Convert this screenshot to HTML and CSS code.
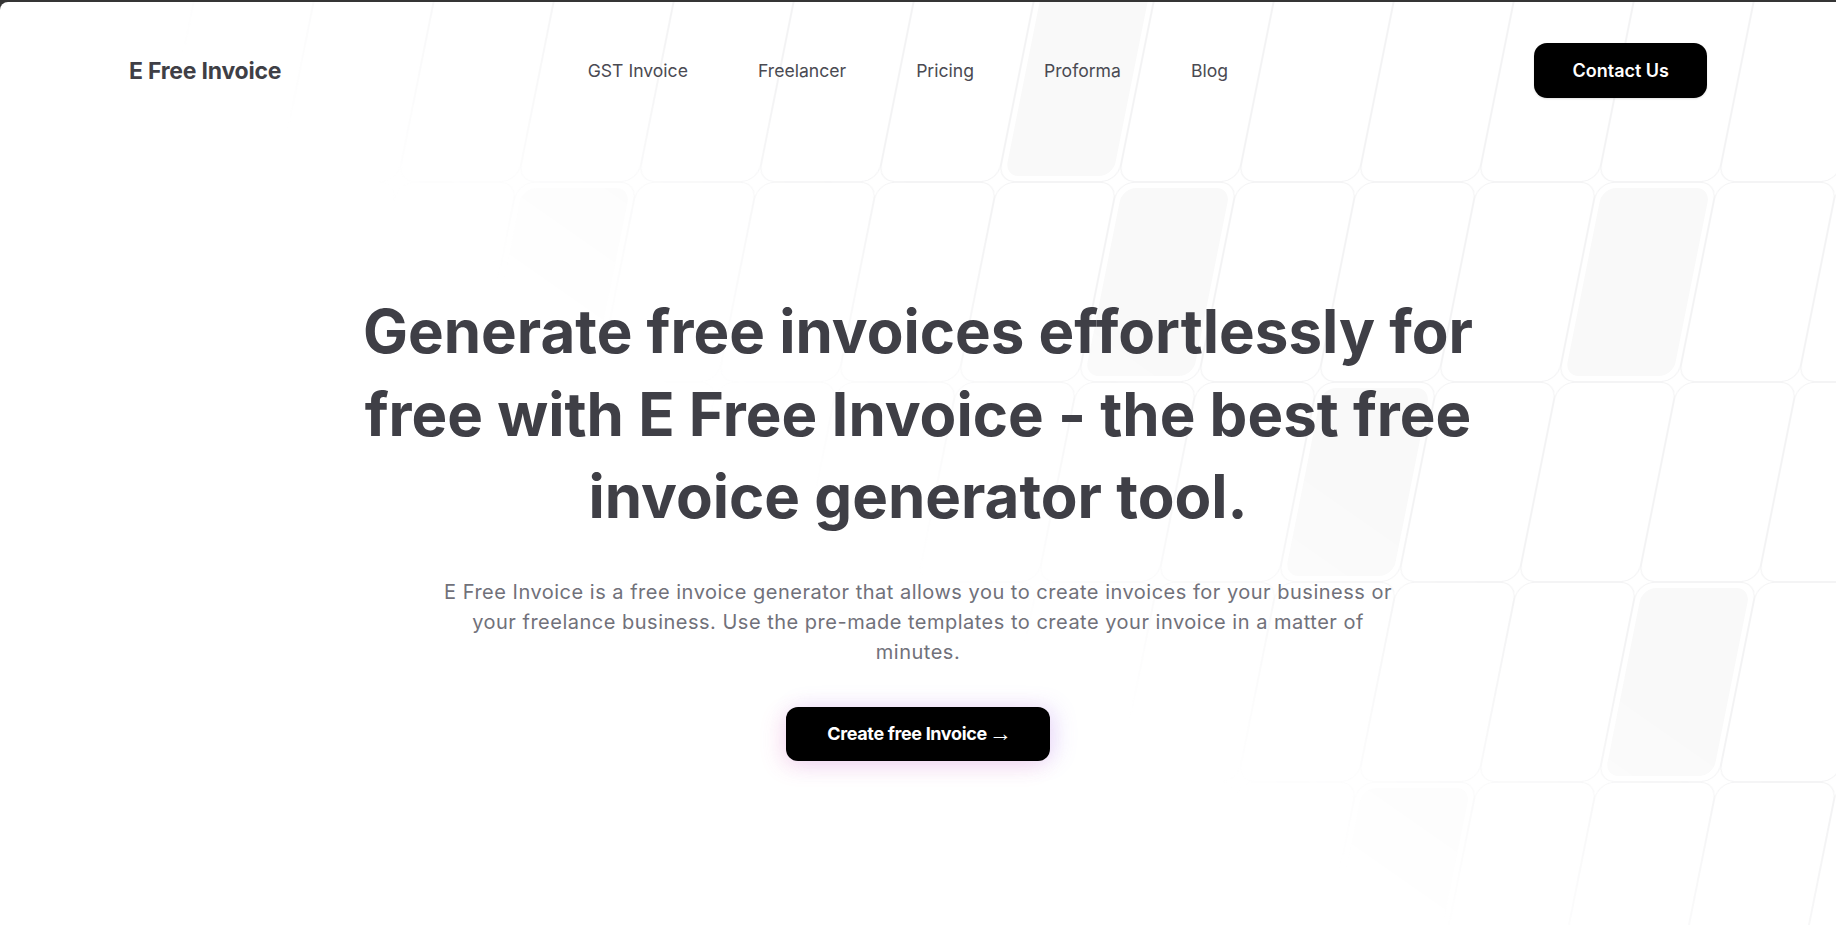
FILE: index.html
```html
<!DOCTYPE html>
<html lang="en">
<head>
<meta charset="utf-8">
<title>E Free Invoice</title>
<link rel="stylesheet" href="styles.css">
</head>
<body>
<div class="page">
  <svg class="grid-bg" xmlns="http://www.w3.org/2000/svg" aria-hidden="true">
    <defs>
      <pattern id="cell" width="120" height="200" patternUnits="userSpaceOnUse" patternTransform="translate(77.6 -20) skewX(-11.31)">
        <rect x="0.5" y="0.5" width="119" height="199" rx="16" ry="16" fill="none" stroke="#f3f3f4" stroke-width="1"/>
      </pattern>
    </defs>
    <rect width="100%" height="100%" fill="url(#cell)"/>
    <g transform="translate(77.6 -20) skewX(-11.31)" fill="#f9f9f9">
      <rect x="966" y="6" width="108" height="188" rx="14"/>
      <rect x="1086" y="206" width="108" height="188" rx="14"/>
      <rect x="1566" y="206" width="108" height="188" rx="14"/>
      <rect x="486" y="206" width="108" height="188" rx="14"/>
      <rect x="1326" y="406" width="108" height="188" rx="14"/>
      <rect x="1686" y="606" width="108" height="188" rx="14"/>
      <rect x="1446" y="806" width="108" height="188" rx="14"/>
    </g>
  </svg>

  <header class="header">
    <a class="logo" href="#">E Free Invoice</a>
    <nav class="nav">
      <a href="#">GST Invoice</a>
      <a href="#">Freelancer</a>
      <a href="#">Pricing</a>
      <a href="#">Proforma</a>
      <a href="#">Blog</a>
    </nav>
    <a class="btn-contact" href="#">Contact Us</a>
  </header>

  <main class="hero">
    <h1 class="hero-title">Generate free invoices effortlessly for free with E Free Invoice - the best free invoice generator tool.</h1>
    <p class="hero-text">E Free Invoice is a free invoice generator that allows you to create invoices for your business or your freelance business. Use the pre-made templates to create your invoice in a matter of minutes.</p>
    <a class="btn-cta" href="#">Create free Invoice<span class="arrow">→</span></a>
  </main>
</div>
</body>
</html>
```

FILE: styles.css
```css
html, body {
  margin: 0;
  height: 100%;
}

body {
  background: #353535;
  overflow: hidden;
  font-family: Inter, "Noto Sans", "Liberation Sans", sans-serif;
}

.page {
  position: relative;
  margin-top: 2px;
  height: calc(100vh - 2px);
  background: #ffffff;
  border-top-left-radius: 8px;
  overflow: hidden;
}

.grid-bg {
  position: absolute;
  inset: 0;
  width: 100%;
  height: 100%;
  z-index: 0;
  -webkit-mask-image: linear-gradient(35deg, transparent 45%, #000 63%);
  mask-image: linear-gradient(35deg, transparent 45%, #000 63%);
}

.header {
  position: relative;
  z-index: 1;
  display: flex;
  align-items: center;
  justify-content: space-between;
  padding: 41px 129px 0;
}

.logo {
  font-size: 23px;
  font-weight: 700;
  color: #3f3f46;
  text-decoration: none;
  letter-spacing: -0.01em;
}

.nav {
  display: flex;
  gap: 70px;
}

.nav a {
  font-size: 17.6px;
  color: #4a4a52;
  text-decoration: none;
}

.btn-contact {
  display: flex;
  align-items: center;
  height: 55px;
  padding: 0 38px;
  box-sizing: border-box;
  background: #000;
  color: #fff;
  font-size: 18px;
  font-weight: 600;
  text-decoration: none;
  border-radius: 13px;
  box-shadow: 0 1px 2px rgba(0, 0, 0, 0.12);
}

.hero {
  position: relative;
  z-index: 1;
  display: flex;
  flex-direction: column;
  align-items: center;
  text-align: center;
  padding-top: 192px;
}

.hero-title {
  margin: 0;
  max-width: 1180px;
  font-size: 60px;
  line-height: 82.5px;
  font-weight: 700;
  color: #3f3f46;
}

.hero-text {
  margin: 39px 0 0;
  max-width: 958px;
  font-size: 20px;
  line-height: 30px;
  letter-spacing: 0.025em;
  color: #71717a;
}

.btn-cta {
  display: flex;
  align-items: center;
  height: 54px;
  margin-top: 40px;
  padding: 0 38px 0 41px;
  box-sizing: border-box;
  background: #000;
  color: #fff;
  font-size: 18px;
  font-weight: 700;
  letter-spacing: -0.02em;
  text-decoration: none;
  border-radius: 12px;
  box-shadow: -6px 6px 22px rgba(236, 72, 153, 0.14), 6px 0 22px rgba(139, 92, 246, 0.18);
}

.arrow {
  margin-left: 2px;
  font-family: "Liberation Sans", sans-serif;
  font-weight: 700;
  font-size: 23px;
  line-height: 1;
  letter-spacing: 0;
}
```
